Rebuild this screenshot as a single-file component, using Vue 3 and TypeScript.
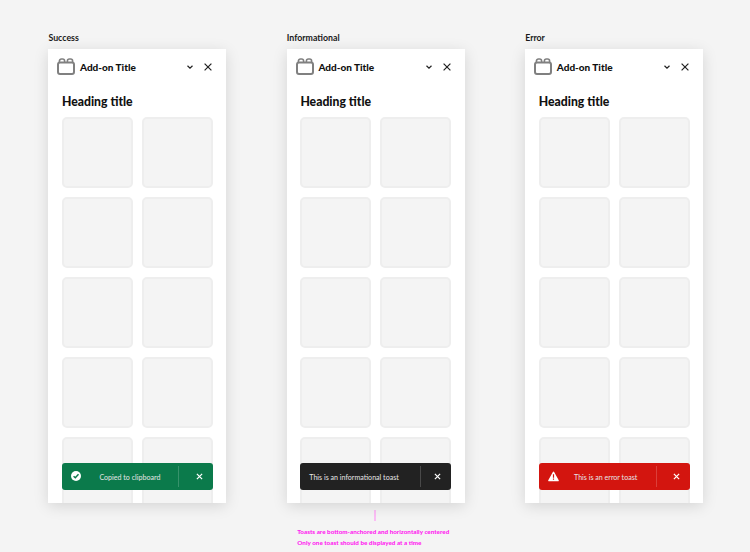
<template>
  <div class="board">
    <section v-for="item in variants" :key="item.label" class="column">
      <h3 class="column-label">{{ item.label }}</h3>
      <div class="panel">
        <header class="panel-header">
          <svg class="addon-icon" viewBox="0 0 18 17" fill="none">
            <rect x="1" y="4.4" width="16" height="11.6" rx="2" stroke="#808080" stroke-width="2" />
            <path d="M2.4 4.4V3a2 2 0 0 1 2-2h1.2a2 2 0 0 1 2 2v1.4M10.4 4.4V3a2 2 0 0 1 2-2h1.2a2 2 0 0 1 2 2v1.4" stroke="#808080" stroke-width="1.6" />
          </svg>
          <span class="addon-title">Add-on Title</span>
          <svg class="chevron" viewBox="0 0 6 4" fill="none">
            <path d="M.5.7 3 3.1 5.5.7" stroke="#222" stroke-width="1.2" />
          </svg>
          <svg class="close" viewBox="0 0 8 8" fill="none">
            <path d="M.6.6l6.8 6.8M7.4.6.6 7.4" stroke="#222" stroke-width="1.2" />
          </svg>
        </header>
        <div class="panel-body">
          <h2 class="heading">Heading title</h2>
          <div class="tiles">
            <div v-for="n in 10" :key="n" class="tile"></div>
          </div>
        </div>
        <div class="toast" :class="item.kind">
          <svg v-if="item.kind === 'success'" class="toast-icon" viewBox="0 0 12 12">
            <circle cx="6" cy="6" r="6" fill="#fff" />
            <path d="M3.1 6.2 5.2 8.2 9 4" fill="none" stroke="#0b7a4b" stroke-width="1.7" />
          </svg>
          <svg v-if="item.kind === 'error'" class="toast-icon" viewBox="0 0 12 12">
            <path d="M6 .6a.8.8 0 0 1 .7.4l5 9a.8.8 0 0 1-.7 1.2H1a.8.8 0 0 1-.7-1.2l5-9A.8.8 0 0 1 6 .6z" fill="#fff" />
            <path d="M6 3.6v3.8M6 8.3v1.3" stroke="#d3150f" stroke-width="1.3" />
          </svg>
          <span class="toast-text">{{ item.text }}</span>
          <span class="toast-divider"></span>
          <svg class="toast-close" viewBox="0 0 8 8" fill="none">
            <path d="M1 1l6 6M7 1 1 7" stroke="#fff" stroke-width="1.4" />
          </svg>
        </div>
      </div>
      <div v-if="item.kind === 'info'" class="note">
        <span class="note-line"></span>
        <p>Toasts are bottom-anchored and horizontally centered</p>
        <p>Only one toast should be displayed at a time</p>
      </div>
    </section>
  </div>
</template>

<script setup lang="ts">
const variants = [
  { label: 'Success', kind: 'success', text: 'Copied to clipboard' },
  { label: 'Informational', kind: 'info', text: 'This is an informational toast' },
  { label: 'Error', kind: 'error', text: 'This is an error toast' },
]
</script>

<style>
html,
body {
  margin: 0;
  background: #f4f4f4;
}
</style>

<style scoped>
.board {
  width: 750px;
  height: 552px;
  overflow: hidden;
  box-sizing: border-box;
  padding: 32px 0 0 48.4px;
  display: grid;
  grid-template-columns: 238.4px 238.4px 178px;
  align-items: start;
  background: #f4f4f4;
  font-family: Lato, "Noto Sans", sans-serif;
}

.column {
  width: 178px;
  display: flex;
  flex-direction: column;
}

.column-label {
  margin: 0 0 6px;
  font-size: 8.8px;
  line-height: 11px;
  font-weight: 700;
  color: #1a1a1a;
}

.panel {
  position: relative;
  height: 454px;
  overflow: hidden;
  background: #fff;
  box-shadow: 0 3px 14px rgba(0, 0, 0, 0.13);
}

.panel-header {
  height: 36px;
  display: flex;
  align-items: center;
  padding-left: 9px;
}

.addon-icon {
  width: 18px;
  height: 17px;
  flex: none;
  margin-top: -1px;
}

.addon-title {
  margin-left: 4.6px;
  font-size: 10px;
  font-weight: 900;
  color: #111;
}

.chevron {
  width: 6px;
  height: 4px;
  margin-left: auto;
  margin-top: -1px;
}

.close {
  width: 8px;
  height: 8px;
  margin: -1px 14px 0 11px;
}

.panel-body {
  padding: 8px 13px 0 13.6px;
}

.heading {
  margin: 0 0 6px;
  font-size: 12.2px;
  line-height: 18px;
  font-weight: 900;
  color: #111;
}

.tiles {
  display: grid;
  grid-template-columns: 71px 71px;
  grid-auto-rows: 71px;
  gap: 9px;
}

.tile {
  box-sizing: border-box;
  background: #f4f4f4;
  border: 2px solid #eeeeee;
  border-radius: 5px;
}

.toast {
  position: absolute;
  left: 13.5px;
  bottom: 13px;
  width: 151px;
  height: 27px;
  border-radius: 3px;
  display: flex;
  align-items: center;
  color: #fff;
  box-sizing: border-box;
  padding-left: 20px;
}

.toast.success {
  background: #0b7a4b;
}

.toast.info {
  background: #222222;
  padding-left: 9px;
}

.toast.error {
  background: #d3150f;
}

.toast-icon {
  position: absolute;
  left: 9px;
  top: 8px;
  width: 10px;
  height: 10px;
}

.toast.error .toast-icon {
  top: 7.5px;
  width: 11px;
  height: 11px;
}

.toast-text {
  flex: 1;
  margin-top: 1px;
  font-size: 7.1px;
  text-align: center;
  color: #e6e6e6;
  white-space: nowrap;
}

.toast.info .toast-text {
  text-align: left;
}

.toast.error .toast-text {
  padding-right: 3px;
}

.toast-divider {
  width: 1px;
  height: 21px;
  background: rgba(255, 255, 255, 0.18);
}

.toast-close {
  width: 7px;
  height: 7px;
  margin: 0 10px 0 16px;
}

.toast.success .toast-close {
  margin-left: 17px;
}

.toast.info .toast-close {
  margin-left: 13px;
}

.note {
  display: flex;
  flex-direction: column;
  margin-top: 7px;
  font-size: 6.3px;
  line-height: 11px;
  font-weight: 900;
  color: #ff1ff0;
}

.note p {
  margin: 0 0 0 10.5px;
  white-space: nowrap;
}

.note-line {
  align-self: flex-start;
  width: 2px;
  height: 11px;
  margin: 0 0 5px 87.2px;
  background: #fbbdf5;
}
</style>
